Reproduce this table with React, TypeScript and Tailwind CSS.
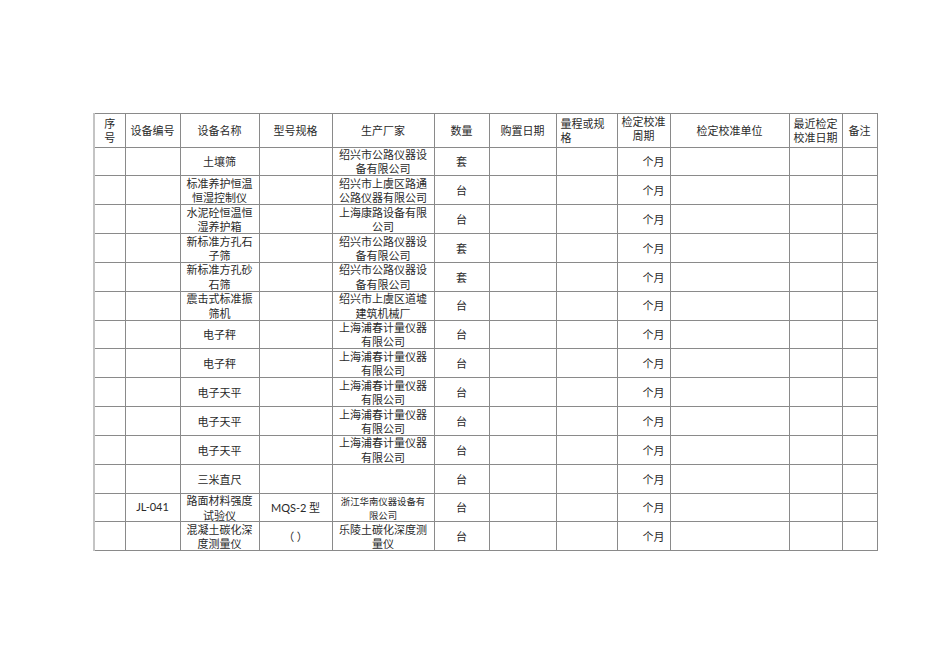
import React from "react";

type Row = {
  code?: string;
  name: string;
  model?: string;
  maker?: string;
  makerSmall?: boolean;
  unit: string;
};

const rows: Row[] = [
  { name: "土壤筛", maker: "绍兴市公路仪器设备有限公司", unit: "套" },
  { name: "标准养护恒温恒湿控制仪", maker: "绍兴市上虞区路通公路仪器有限公司", unit: "台" },
  { name: "水泥砼恒温恒湿养护箱", maker: "上海康路设备有限公司", unit: "台" },
  { name: "新标准方孔石子筛", maker: "绍兴市公路仪器设备有限公司", unit: "套" },
  { name: "新标准方孔砂石筛", maker: "绍兴市公路仪器设备有限公司", unit: "套" },
  { name: "震击式标准振筛机", maker: "绍兴市上虞区道墟建筑机械厂", unit: "台" },
  { name: "电子秤", maker: "上海浦春计量仪器有限公司", unit: "台" },
  { name: "电子秤", maker: "上海浦春计量仪器有限公司", unit: "台" },
  { name: "电子天平", maker: "上海浦春计量仪器有限公司", unit: "台" },
  { name: "电子天平", maker: "上海浦春计量仪器有限公司", unit: "台" },
  { name: "电子天平", maker: "上海浦春计量仪器有限公司", unit: "台" },
  { name: "三米直尺", unit: "台" },
  {
    code: "JL-041",
    name: "路面材料强度试验仪",
    model: "MQS-2 型",
    maker: "浙江华南仪器设备有限公司",
    makerSmall: true,
    unit: "台",
  },
  { name: "混凝土碳化深度测量仪", model: "（ ）", maker: "乐陵土碳化深度测量仪", unit: "台" },
];

// column widths measured off the reference
const widths = [31, 55, 79, 73, 102, 55, 67, 61, 53, 119, 53, 35];

const td = "border border-[#8a8a8a] p-0 align-middle";
const latin = "font-['Lato','Liberation_Sans',sans-serif]";

// fixed-height box so rows keep the sheet's pitch; text may spill like in the original
function Box({ h, className = "", children }: { h: string; className?: string; children?: React.ReactNode }) {
  return <div className={`flex items-center ${h} ${className}`}>{children}</div>;
}

export default function App() {
  const head = "h-[32.5px] justify-center text-center px-[5px]";
  const body = "h-[27.85px] px-[5px]";
  return (
    <div className="min-h-[672px] w-[950px] bg-white pl-[93px] pt-[113px] font-['Noto_Sans_CJK_SC',sans-serif] text-[11px] leading-[14.4px] text-[#2a2a2a]">
      <table className="table-fixed border-collapse border-l-2 border-l-[#c4c4c4]" style={{ width: 784 }}>
        <colgroup>
          {widths.map((w, i) => (
            <col key={i} style={{ width: w }} />
          ))}
        </colgroup>
        <thead>
          <tr>
            <th className={`${td} font-normal`}><Box h={head}>序号</Box></th>
            <th className={`${td} font-normal`}><Box h={head}>设备编号</Box></th>
            <th className={`${td} font-normal`}><Box h={head}>设备名称</Box></th>
            <th className={`${td} font-normal`}><Box h={head}>型号规格</Box></th>
            <th className={`${td} font-normal`}><Box h={head}>生产厂家</Box></th>
            <th className={`${td} font-normal`}><Box h={head}>数量</Box></th>
            <th className={`${td} font-normal`}><Box h={head}>购置日期</Box></th>
            <th className={`${td} font-normal`}>
              <Box h="h-[32.5px] pl-[4px] pr-[5px] text-left items-start pt-[2px]">量程或规格</Box>
            </th>
            <th className={`${td} font-normal`}>
              <Box h="h-[32.5px] justify-center text-center px-[3px] items-start">检定校准周期</Box>
            </th>
            <th className={`${td} font-normal`}><Box h={head}>检定校准单位</Box></th>
            <th className={`${td} font-normal`}>
              <Box h="h-[32.5px] justify-center text-center px-[3px]">最近检定校准日期</Box>
            </th>
            <th className={`${td} font-normal`}><Box h="h-[32.5px] justify-center px-[2px]">备注</Box></th>
          </tr>
        </thead>
        <tbody>
          {rows.map((r, i) => (
            <tr key={i}>
              <td className={td}><Box h={body} /></td>
              <td className={td}>
                <Box h={`${body} justify-center text-center ${latin}`}>{r.code}</Box>
              </td>
              <td className={td}>
                <Box h={`${body} justify-center text-center`}>{r.name}</Box>
              </td>
              <td className={td}>
                <Box h={`${body} justify-center text-center`}>
                  {r.model && r.model.startsWith("MQS") ? (
                    <span>
                      <span className={latin}>MQS-2</span> 型
                    </span>
                  ) : (
                    r.model
                  )}
                </Box>
              </td>
              <td className={td}>
                <Box
                  h={`h-[27.85px] px-[6px] justify-center text-center ${
                    r.makerSmall ? "text-[9.4px] leading-[14px]" : ""
                  }`}
                >
                  {r.maker}
                </Box>
              </td>
              <td className={td}>
                <Box h={`${body} justify-center`}>{r.unit}</Box>
              </td>
              <td className={td}><Box h={body} /></td>
              <td className={td}><Box h={body} /></td>
              <td className={td}>
                <Box h={`${body} justify-end`}>个月</Box>
              </td>
              <td className={td}><Box h={body} /></td>
              <td className={td}><Box h={body} /></td>
              <td className={td}><Box h={body} /></td>
            </tr>
          ))}
        </tbody>
      </table>
    </div>
  );
}
